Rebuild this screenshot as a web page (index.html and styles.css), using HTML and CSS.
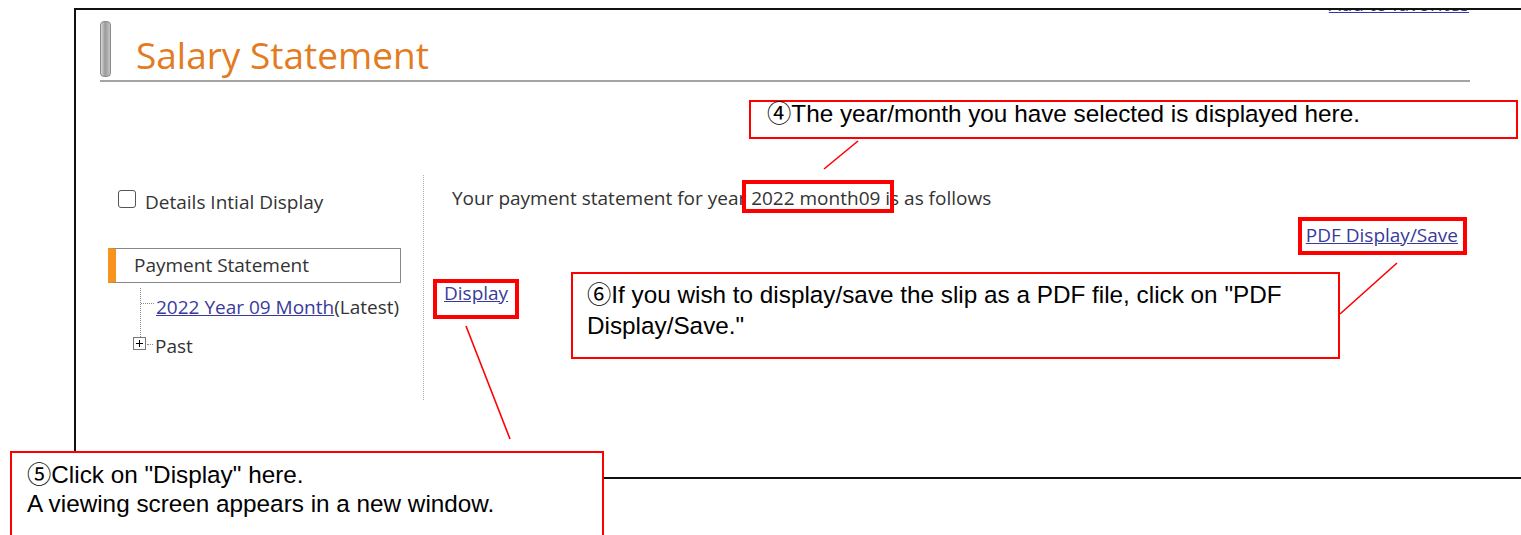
FILE: index.html
```html
<!DOCTYPE html>
<html lang="en">
<head>
<meta charset="utf-8">
<title>Salary Statement</title>
<link rel="stylesheet" href="styles.css">
</head>
<body>
<div class="slide">
  <div class="window">
    <div class="toplinks"><a href="#">Add to favorites</a></div>

    <div class="title-row">
      <span class="title-bar"></span>
      <h1>Salary Statement</h1>
    </div>

    <div class="main">
      <aside class="side">
        <label class="check"><span class="check-box"></span>Details Intial Display</label>
        <div class="nav-head">Payment Statement</div>
        <ul class="tree">
          <li class="leaf"><a href="#">2022 Year 09 Month</a>(Latest)</li>
          <li class="node"><span class="plus"></span><span class="node-label">Past</span></li>
        </ul>
      </aside>
      <div class="divider"></div>
      <section class="content">
        <p class="lead">Your payment statement for year 2022 month09 is as follows</p>
        <div class="pdf-row"><a href="#">PDF Display/Save</a></div>
        <a class="display-link" href="#">Display</a>
      </section>
    </div>
  </div>

  <!-- highlight frames -->
  <div class="hl hl-month"></div>
  <div class="hl hl-pdf"></div>
  <div class="hl hl-display"></div>

  <!-- leader lines -->
  <svg class="leaders" width="1521" height="535" viewBox="0 0 1521 535">
    <line x1="858" y1="141" x2="824" y2="169"/>
    <line x1="1397" y1="263" x2="1340" y2="314"/>
    <line x1="466" y1="326" x2="510" y2="439"/>
  </svg>

  <!-- notes -->
  <div class="note note-4">④The year/month you have selected is displayed here.</div>
  <div class="note note-6">⑥If you wish to display/save the slip as a PDF file, click on "PDF<br>Display/Save."</div>
  <div class="note note-5">⑤Click on "Display" here.<br>A viewing screen appears in a new window.</div>
</div>
</body>
</html>
```

FILE: styles.css
```css
html, body {
  margin: 0;
  padding: 0;
  background: #fff;
}

.slide {
  position: relative;
  width: 1521px;
  height: 535px;
  overflow: hidden;
  padding: 8px 0 0 74px;
  box-sizing: border-box;
  font-family: "Open Sans", "Noto Sans", sans-serif;
  font-size: 19px;
  line-height: 22px;
  color: #333;
}

a {
  color: #3a3a9c;
  text-decoration: underline;
}

/* application window */
.window {
  width: 1470px;
  height: 471px;
  box-sizing: border-box;
  border-top: 2px solid #111;
  border-left: 2px solid #111;
  border-bottom: 2px solid #111;
  overflow: hidden;
}

.toplinks {
  width: 1393px;
  height: 5px;
  overflow: hidden;
  display: flex;
  justify-content: flex-end;
  align-items: flex-end;
  font-size: 19px;
}
.toplinks a {
  line-height: 22px;
  flex: none;
}

.title-row {
  display: flex;
  align-items: flex-end;
  width: 1370px;
  margin: 6px 0 0 24px;
  padding-bottom: 3px;
  border-bottom: 2px solid #a4a4a4;
}
.title-bar {
  flex: none;
  width: 11px;
  height: 56px;
  box-sizing: border-box;
  border: 1px solid #8a8a8a;
  border-radius: 4px;
  background: linear-gradient(to right, #d8d8d8, #9a9a9a 45%, #c4c4c4);
}
.title-row h1 {
  margin: 0 0 4px 25px;
  font-size: 37px;
  line-height: 37px;
  font-weight: 400;
  color: #e27b22;
}

.main {
  display: flex;
  align-items: flex-start;
}

/* left navigation */
.side {
  width: 323px;
  margin-left: 24px;
  flex: none;
}
.check {
  display: flex;
  align-items: flex-start;
  margin: 109px 0 0 18px;
}
.check-box {
  width: 18px;
  height: 18px;
  box-sizing: border-box;
  border: 1px solid #555;
  border-radius: 3px;
  background: #fff;
  margin: -1px 9px 0 0;
}
.nav-head {
  width: 293px;
  height: 35px;
  box-sizing: border-box;
  margin: 35px 0 0 8px;
  border: 1px solid #888;
  border-left: 8px solid #f7941d;
  padding-left: 18px;
  line-height: 33px;
}
.tree {
  list-style: none;
  margin: 5px 0 0 40px;
  padding: 0;
}
.leaf {
  position: relative;
  height: 49px;
  box-sizing: border-box;
  padding: 8px 0 0 15px;
  border-left: 1px dotted #888;
}
.leaf::before {
  content: "";
  position: absolute;
  left: 0;
  top: 15px;
  width: 13px;
  border-top: 1px dotted #888;
}
.node {
  display: flex;
  align-items: flex-start;
  margin-left: -7px;
}
.plus {
  position: relative;
  width: 13px;
  height: 13px;
  box-sizing: border-box;
  border: 1px solid #777;
  background: #fff;
  flex: none;
}
.plus::before,
.plus::after {
  content: "";
  position: absolute;
  background: #000;
}
.plus::before { left: 2px; top: 5px; width: 7px; height: 1px; }
.plus::after { left: 5px; top: 2px; width: 1px; height: 7px; }
.node-label {
  position: relative;
  padding-left: 9px;
  margin-top: -2px;
}
.node-label::before {
  content: "";
  position: absolute;
  left: 1px;
  top: 9px;
  width: 6px;
  border-top: 1px dotted #888;
}

.divider {
  flex: none;
  width: 0;
  height: 225px;
  margin-top: 93px;
  border-left: 1px dotted #aaa;
}

/* statement pane */
.content {
  width: 1034px;
  flex: none;
}
.lead {
  margin: 105px 0 0 28px;
}
.pdf-row {
  margin-top: 15px;
  text-align: right;
}
.display-link {
  display: inline-block;
  margin: 36px 0 0 20px;
}

/* red highlight frames */
.hl {
  position: absolute;
  box-sizing: border-box;
  border: 4px solid #f00;
}
.hl-month { left: 742px; top: 180px; width: 152px; height: 33px; }
.hl-pdf { left: 1298px; top: 217px; width: 169px; height: 38px; }
.hl-display { left: 433px; top: 279px; width: 86px; height: 40px; }

.leaders {
  position: absolute;
  left: 0;
  top: 0;
}
.leaders line {
  stroke: #f00;
  stroke-width: 1.6;
}

/* explanatory notes */
.note {
  position: absolute;
  box-sizing: border-box;
  background: #fff;
  border: 2px solid #f00;
  font-family: "Liberation Sans", "Noto Sans CJK JP", sans-serif;
  font-size: 24.3px;
  color: #000;
  white-space: nowrap;
}
.note-4 {
  left: 749px;
  top: 100px;
  width: 769px;
  height: 39px;
  padding-left: 16px;
  line-height: 24px;
}
.note-6 {
  left: 571px;
  top: 272px;
  width: 769px;
  height: 87px;
  padding: 5px 0 0 14px;
  line-height: 31px;
}
.note-5 {
  left: 10px;
  top: 451px;
  width: 594px;
  height: 100px;
  padding: 7px 0 0 15px;
  line-height: 29px;
}
```
